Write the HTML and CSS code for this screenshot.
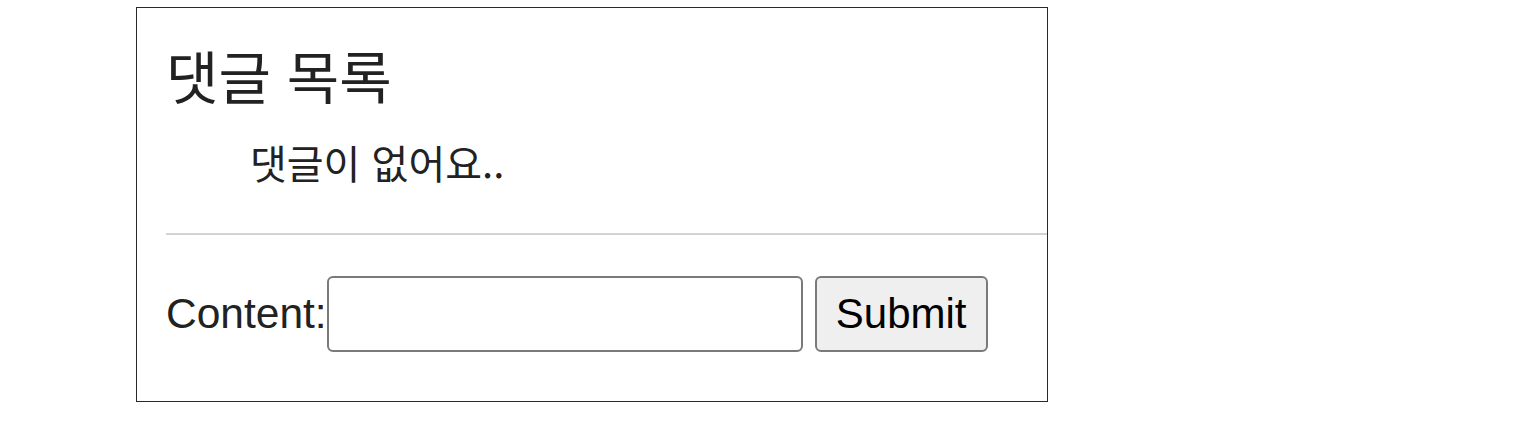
FILE: index.html
```html
<!DOCTYPE html>
<html lang="ko">
<head>
<meta charset="utf-8">
<title>댓글 목록</title>
<link rel="stylesheet" href="styles.css">
</head>
<body>
<div class="box">
  <h2 class="title">댓글 목록</h2>
  <p class="empty">댓글이 없어요..</p>
  <hr class="divider">
  <form class="form">
    <label class="label" for="content">Content:</label>
    <input class="input" id="content" type="text">
    <button class="btn" type="button">Submit</button>
  </form>
</div>
</body>
</html>
```
FILE: styles.css
```css
html, body {
  margin: 0;
  background: #fff;
}
body {
  font-family: "Liberation Sans", "Noto Sans CJK KR", sans-serif;
}
.box {
  margin: 7px 0 0 136px;
  border: 1px solid #2a2a2a;
  padding: 0 0 49px 29px;
  box-sizing: content-box;
  width: 881px;
}
.title {
  margin: 34px 0 0;
  font-size: 57px;
  line-height: 64px;
  font-weight: normal;
  color: #222;
  font-family: "Noto Sans CJK KR", sans-serif;
}
.empty {
  margin: 31px 0 0;
  padding-left: 84px;
  font-size: 40px;
  line-height: 50px;
  color: #222;
  font-family: "Noto Sans CJK KR", sans-serif;
}
.divider {
  margin: 46px 0 0;
  border: 0;
  height: 2px;
  background: #d3d3d3;
}
.form {
  margin-top: 41px;
  display: flex;
  align-items: center;
}
.label {
  font-size: 42.5px;
  color: #222;
}
.input {
  box-sizing: border-box;
  width: 476px;
  height: 76px;
  margin: 0;
  border: 2px solid #7a7a7a;
  border-radius: 6px;
  background: #fff;
  font-size: 42px;
  padding: 0 8px;
}
.btn {
  box-sizing: border-box;
  margin: 0 0 0 12px;
  width: 173px;
  height: 76px;
  border: 2px solid #7a7a7a;
  border-radius: 6px;
  background: #efefef;
  font-family: "Liberation Sans", sans-serif;
  font-size: 42px;
  color: #000;
  padding: 0;
}
```
